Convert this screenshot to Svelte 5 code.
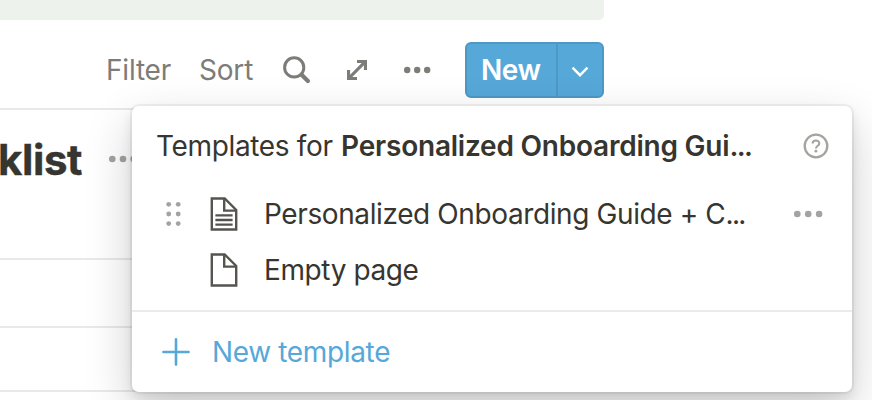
<script>
  const templates = [
    { name: 'Personalized Onboarding Guide + C', clipped: true, filled: true },
    { name: 'Empty page', clipped: false, filled: false }
  ];
</script>

{#snippet dots(width, gap, r)}
  <svg {width} height="10" viewBox="0 0 {width} 10" fill="currentColor">
    {#each [0, 1, 2] as i}
      <circle cx={r + i * gap} cy="5" {r} />
    {/each}
  </svg>
{/snippet}

<div class="page">
  <div class="banner"></div>
  <div class="toolbar">
    <span class="filter">Filter</span>
    <span class="sort">Sort</span>
    <svg class="search" width="28" height="28" viewBox="0 0 28 28" fill="none" stroke="currentColor">
      <circle cx="11.2" cy="11.4" r="9.6" stroke-width="3" />
      <path d="M18.6 18.8 L24.9 25" stroke-width="4.2" stroke-linecap="round" />
    </svg>
    <svg class="expand" width="20" height="20" viewBox="0 0 20 20">
      <path d="M10 0 H20 V10 H16.9 V5.3 L5.3 16.9 H10 V20 H0 V10 H3.1 V14.7 L14.7 3.1 H10 Z" fill="currentColor" />
    </svg>
    <span class="more">{@render dots(27, 10, 3.2)}</span>
    <div class="button">
      <span class="new">New</span>
      <span class="chevron">
        <svg width="18" height="12" viewBox="0 0 18 12"><path d="M1.5 1.7 L9 9.2 L16.5 1.7" fill="none" stroke="#fff" stroke-width="2.4" /></svg>
      </span>
    </div>
  </div>
  <div class="heading">
    <span class="title">klist</span>
    <span class="heading-more">{@render dots(28, 10.7, 3.3)}</span>
  </div>
  <div class="row"></div>
  <div class="row last"></div>

  <div class="popover">
    <div class="head">
      <span class="label">Templates for <b>Personalized Onboarding Gui<span class="ellipsis">...</span></b></span>
      <svg width="26" height="26" viewBox="0 0 26 26" fill="none" stroke="#a3a3a0">
        <circle cx="13" cy="13" r="11.3" stroke-width="2.3" />
        <path d="M9.6 10.5 C9.7 6.6 16.3 6.6 16.3 10.4 C16.3 12.8 13 12.7 13 15.4" stroke-width="2.1" />
        <circle cx="12.9" cy="18.2" r="1.4" fill="#a3a3a0" stroke="none" />
      </svg>
    </div>
    {#each templates as t}
      <div class="template">
        <span class="grip">
          {#if t.filled}
            <svg width="16" height="26" viewBox="0 0 16 26" fill="#a3a3a0">
              {#each [3.3, 13, 22.6] as y}
                <circle cx="2.7" cy={y} r="2.4" /><circle cx="12.2" cy={y} r="2.4" />
              {/each}
            </svg>
          {/if}
        </span>
        <svg class="file" width="28" height="34" viewBox="0 0 28 34" fill="none" stroke="#55544f" stroke-width="2.4">
          <path d="M1.8 1.5 H14.7 L26.2 13 V32.5 H1.8 Z" />
          <path d="M14.2 1.5 V13.6 H26" />
          {#if t.filled}
            <path d="M5.4 18.4 H22.6 M5.4 23 H22.6 M5.4 27.6 H22.6" />
          {/if}
        </svg>
        <span class="name">{t.name}{#if t.clipped}<span class="ellipsis">...</span>{/if}</span>
        {#if t.filled}<span class="row-more">{@render dots(29, 10.9, 3.3)}</span>{/if}
      </div>
    {/each}
    <div class="footer">
      <svg width="28" height="28" viewBox="0 0 28 28"><path d="M14 1.4 V26.6 M1.4 14 H26.6" stroke="#56a8d9" stroke-width="2.6" stroke-linecap="round" /></svg>
      <span>New template</span>
    </div>
  </div>
</div>

<style>
  .page {
    position: relative;
    box-sizing: border-box;
    width: 872px;
    height: 400px;
    overflow: hidden;
    background: #fff;
    color: #37352f;
    font: 400 28px/36px Inter, "Liberation Sans", sans-serif;
    white-space: nowrap;
  }
  svg { display: block; flex: none; }
  .banner { width: 604px; height: 20px; background: #edf3ec; border-radius: 0 0 5px 0; }
  .toolbar {
    box-sizing: border-box;
    display: flex;
    align-items: center;
    width: 604px;
    height: 90px;
    padding: 22px 0 10px 106px;
    border-bottom: 2px solid #e9e9e7;
    color: #7d7c78;
  }
  .filter { width: 93px; letter-spacing: -0.2px; }
  .sort { width: 84px; letter-spacing: -0.2px; }
  .expand { margin-left: 36px; }
  .more { margin-left: 37px; }
  .button {
    box-sizing: border-box;
    display: flex;
    width: 139px;
    height: 56px;
    margin-left: auto;
    border: 2px solid #4e98c4;
    border-radius: 6px;
    background: #56a8d9;
    color: #fff;
  }
  .new {
    box-sizing: border-box;
    width: 91px;
    padding-left: 14px;
    border-right: 2px solid #4e98c4;
    font-weight: 600;
    line-height: 52px;
    letter-spacing: -0.4px;
  }
  .chevron { display: flex; flex: 1; align-items: center; justify-content: center; padding-top: 3px; }
  .heading {
    box-sizing: border-box;
    display: flex;
    align-items: center;
    width: 604px;
    height: 150px;
    padding-bottom: 50px;
    border-bottom: 2px solid #e9e9e7;
    color: #a3a3a0;
  }
  .title { width: 111px; margin-left: -2px; padding-top: 2px; color: #37352f; font-size: 42px; font-weight: 700; letter-spacing: -0.4px; line-height: 50px; -webkit-text-stroke: 0.4px #37352f; }
  .row { box-sizing: border-box; width: 604px; height: 68px; border-bottom: 2px solid #e9e9e7; }
  .row.last { height: 64px; }
  .popover {
    position: absolute;
    left: 132px;
    top: 106px;
    width: 720px;
    height: 286px;
    border-radius: 7px;
    background: #fff;
    box-shadow: 0 0 0 2px rgba(15, 15, 15, .05), 0 6px 12px rgba(15, 15, 15, .1), 0 18px 48px rgba(15, 15, 15, .2);
    letter-spacing: -0.35px;
  }
  .head { display: flex; align-items: center; justify-content: space-between; height: 80px; padding: 0 23px 0 24px; }
  .head b { margin-left: 1px; font-weight: 600; letter-spacing: -0.22px; }
  .ellipsis { letter-spacing: -1.6px; }
  .head .ellipsis { letter-spacing: -1.6px; }
  .template { display: flex; align-items: center; height: 56px; padding: 0 29px 0 34px; }
  .grip { width: 44px; }
  .name { margin-left: 26px; letter-spacing: -0.39px; }
  .row-more { margin-left: auto; color: #a3a3a0; }
  .footer {
    box-sizing: border-box;
    display: flex;
    align-items: center;
    gap: 22px;
    height: 82px;
    margin-top: 12px;
    padding-left: 30px;
    border-top: 2px solid #ebebea;
    color: #56a8d9;
  }
</style>
